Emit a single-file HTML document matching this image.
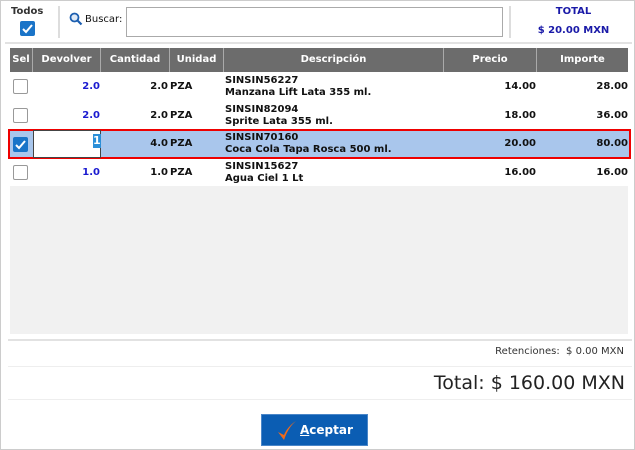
<!DOCTYPE html>
<html><head><meta charset="utf-8"><style>
*{margin:0;padding:0;box-sizing:border-box}
body{width:635px;height:450px;background:#fff;font-family:"DejaVu Sans","Liberation Sans",sans-serif;font-size:10px;color:#111;position:relative;overflow:hidden;border:1px solid #ccc}
.a{position:absolute}
.b{font-weight:bold}
.cb{position:absolute;width:15px;height:15px;border:1px solid #999;background:#fff;border-radius:2px}
.cbc{position:absolute;width:15px;height:15px;background:#1a74c8;border-radius:2px}
.hd{position:absolute;top:47px;height:24px;background:#6c6c6c;color:#fff;font-weight:bold;font-size:10px;line-height:24px;text-align:center;border-right:1px solid #aaa}
.r{text-align:right}
.blue{color:#1a1ad0}
</style></head><body>
<div class="a b" style="left:10px;top:5px;font-size:10px;color:#333">Todos</div>
<div class="cbc" style="left:19px;top:20px"><svg width="15" height="15"><path d="M3 8l3 3 6-7" stroke="#fff" stroke-width="2" fill="none"/></svg></div>
<div class="a" style="left:57px;top:5px;width:2px;height:32px;background:#ddd"></div>
<svg class="a" style="left:68px;top:11px" width="14" height="14"><circle cx="5.5" cy="5.5" r="4" stroke="#1d5fb0" stroke-width="1.8" fill="#dfeaf7"/><path d="M8.5 8.5l4 4" stroke="#1d5fb0" stroke-width="2.2"/></svg>
<div class="a" style="left:84px;top:13px">Buscar:</div>
<div class="a" style="left:125px;top:6px;width:377px;height:30px;border:1px solid #aaa"></div>
<div class="a" style="left:508px;top:5px;width:2px;height:32px;background:#ddd"></div>
<div class="a b blue" style="left:510px;top:5px;width:125px;text-align:center;color:#1a1aa8">TOTAL</div>
<div class="a b" style="left:510px;top:24px;width:125px;text-align:center;color:#1a1aa8">$ 20.00 MXN</div>
<div class="a" style="left:4px;top:41px;width:627px;height:2px;background:#e2e2e2"></div>
<div class="hd" style="left:9px;width:23px">Sel</div>
<div class="hd" style="left:32px;width:68px">Devolver</div>
<div class="hd" style="left:100px;width:69px">Cantidad</div>
<div class="hd" style="left:169px;width:54px">Unidad</div>
<div class="hd" style="left:223px;width:220px">Descripción</div>
<div class="hd" style="left:443px;width:93px">Precio</div>
<div class="hd" style="left:536px;width:91px;border-right:0">Importe</div>
<div class="a" style="left:9px;top:185px;width:618px;height:148px;background:#f1f1f1"></div>
<div class="a" style="left:7px;top:128px;width:623px;height:30px;background:#a9c6ec;border:2px solid #e00"></div>
<div class="a" style="left:32px;top:129px;width:68px;height:28px;background:#fff;border:1px solid #444"></div>
<div class="a" style="left:92px;top:133px;width:8px;height:14px;background:#2b8fd8;color:#fff;font-weight:bold;font-size:11px;line-height:14px">1</div>
<div class="cb" style="left:12px;top:78px"></div>
<div class="cb" style="left:12px;top:107px"></div>
<div class="cbc" style="left:12px;top:136px"><svg width="15" height="15"><path d="M3 8l3 3 6-7" stroke="#fff" stroke-width="2" fill="none"/></svg></div>
<div class="cb" style="left:12px;top:164px"></div>
<div class="a b blue r" style="left:32px;top:80px;width:67px">2.0</div>
<div class="a b blue r" style="left:32px;top:109px;width:67px">2.0</div>
<div class="a b blue r" style="left:32px;top:166px;width:67px">1.0</div>
<div class="a b r" style="left:100px;top:80px;width:67px">2.0</div><div class="a b" style="left:169px;top:80px">PZA</div>
<div class="a b r" style="left:100px;top:109px;width:67px">2.0</div><div class="a b" style="left:169px;top:109px">PZA</div>
<div class="a b r" style="left:100px;top:137px;width:67px">4.0</div><div class="a b" style="left:169px;top:137px">PZA</div>
<div class="a b r" style="left:100px;top:166px;width:67px">1.0</div><div class="a b" style="left:169px;top:166px">PZA</div>
<div class="a b" style="left:224px;top:74px;line-height:12px">SINSIN56227<br>Manzana Lift Lata 355 ml.</div>
<div class="a b" style="left:224px;top:103px;line-height:12px">SINSIN82094<br>Sprite Lata 355 ml.</div>
<div class="a b" style="left:224px;top:131px;line-height:12px">SINSIN70160<br>Coca Cola Tapa Rosca 500 ml.</div>
<div class="a b" style="left:224px;top:160px;line-height:12px">SINSIN15627<br>Agua Ciel 1 Lt</div>
<div class="a b r" style="left:443px;top:80px;width:92px">14.00</div><div class="a b r" style="left:536px;top:80px;width:91px">28.00</div>
<div class="a b r" style="left:443px;top:109px;width:92px">18.00</div><div class="a b r" style="left:536px;top:109px;width:91px">36.00</div>
<div class="a b r" style="left:443px;top:137px;width:92px">20.00</div><div class="a b r" style="left:536px;top:137px;width:91px">80.00</div>
<div class="a b r" style="left:443px;top:166px;width:92px">16.00</div><div class="a b r" style="left:536px;top:166px;width:91px">16.00</div>
<div class="a" style="left:7px;top:338px;width:624px;height:2px;background:#e2e2e2"></div>
<div class="a r" style="left:300px;top:345px;width:323px;color:#333">Retenciones:&nbsp; $ 0.00 MXN</div>
<div class="a" style="left:7px;top:365px;width:624px;height:1px;background:#eee"></div>
<div class="a r" style="left:300px;top:371px;width:324px;font-size:19px;color:#222">Total: $ 160.00 MXN</div>
<div class="a" style="left:7px;top:398px;width:624px;height:1px;background:#eee"></div>
<div class="a" style="left:260px;top:413px;width:107px;height:32px;background:#0b5db3;border:1px solid #4a86c8;color:#fff;font-weight:bold;font-size:12px;line-height:30px">
<svg class="a" style="left:15px;top:5px" width="20" height="22"><path d="M1 12l6 8C10 11 14 5 19 1C13 5 9 10 7 15z" fill="#f06a1a"/></svg>
<span class="a" style="left:38px;top:0"><u>A</u>ceptar</span></div>
</body></html>
